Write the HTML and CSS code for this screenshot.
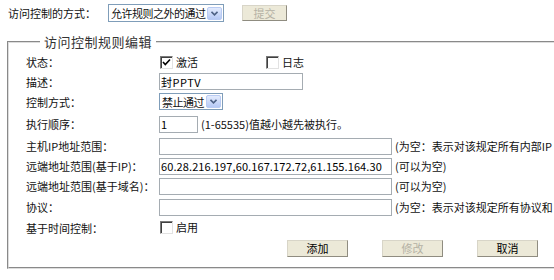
FILE: index.html
```html
<!DOCTYPE html>
<html>
<head>
  <meta charset="utf-8">
  <title>访问控制</title>
  <link rel="stylesheet" href="styles.css">
</head>
<body>
  <div class="topbar">
    <span class="top-label">访问控制的方式：</span>
    <div class="sel sel-mode">
      <span class="sel-text">允许规则之外的通过</span>
      <span class="sel-arrow"><svg width="7" height="5" viewBox="0 0 7 5"><path d="M0.5 0.8 L3.5 3.8 L6.5 0.8" fill="none" stroke="#4d6185" stroke-width="1.6"/></svg></span>
    </div>
    <button class="btn btn-submit" disabled>提交</button>
  </div>

  <fieldset class="editor">
    <legend>访问控制规则编辑</legend>
    <table class="form">
      <tr class="r-status">
        <td class="lbl">状态：</td>
        <td>
          <span class="chk-row">
            <span class="chk"><svg width="9" height="9" viewBox="0 0 9 9"><path d="M1 4 L3.3 6.5 L8 1.5" fill="none" stroke="#000" stroke-width="1.6"/></svg></span>激活
            <span class="chk chk-log"></span>日志
          </span>
        </td>
      </tr>
      <tr class="r-desc">
        <td class="lbl">描述：</td>
        <td><input class="txt txt-desc" type="text" value="封PPTV"></td>
      </tr>
      <tr class="r-ctrl">
        <td class="lbl">控制方式：</td>
        <td>
          <div class="sel sel-ctrl">
            <span class="sel-text">禁止通过</span>
            <span class="sel-arrow"><svg width="7" height="5" viewBox="0 0 7 5"><path d="M0.5 0.8 L3.5 3.8 L6.5 0.8" fill="none" stroke="#4d6185" stroke-width="1.6"/></svg></span>
          </div>
        </td>
      </tr>
      <tr class="r-order">
        <td class="lbl">执行顺序：</td>
        <td><input class="txt txt-order" type="text" value="1"><span class="hint">(1-65535)值越小越先被执行。</span></td>
      </tr>
      <tr>
        <td class="lbl">主机IP地址范围：</td>
        <td><input class="txt txt-wide" type="text" value=""><span class="hint">(为空：表示对该规定所有内部IP</span></td>
      </tr>
      <tr>
        <td class="lbl">远端地址范围(基于IP)：</td>
        <td><input class="txt txt-wide txt-ip" type="text" value="60.28.216.197,60.167.172.72,61.155.164.30"><span class="hint">(可以为空)</span></td>
      </tr>
      <tr>
        <td class="lbl">远端地址范围(基于域名)：</td>
        <td><input class="txt txt-wide" type="text" value=""><span class="hint">(可以为空)</span></td>
      </tr>
      <tr class="r-proto">
        <td class="lbl">协议：</td>
        <td><input class="txt txt-wide" type="text" value=""><span class="hint">(为空：表示对该规定所有协议和</span></td>
      </tr>
      <tr>
        <td class="lbl">基于时间控制：</td>
        <td><span class="chk-row"><span class="chk"></span>启用</span></td>
      </tr>
      <tr class="r-buttons">
        <td></td>
        <td>
          <div class="actions">
            <button class="btn">添加</button>
            <button class="btn" disabled>修改</button>
            <button class="btn">取消</button>
          </div>
        </td>
      </tr>
    </table>
  </fieldset>
</body>
</html>
```

FILE: styles.css
```css
html, body {
  margin: 0;
  padding: 0;
}

body {
  width: 554px;
  height: 280px;
  overflow: hidden;
  background-color: #fff;
  color: #111;
  font-family: "Noto Sans CJK SC", sans-serif;
  font-size: 11px;
  line-height: 14px;
}

/* top line */
.topbar {
  display: flex;
  align-items: center;
  height: 18px;
  padding: 4px 0 0 8px;
}

.top-label {
  width: 100px;
}

.sel {
  display: inline-flex;
  align-items: center;
  box-sizing: border-box;
  height: 17px;
  padding: 0 1px 0 2px;
  border: 1px solid #7f9db9;
  background-color: #fff;
  vertical-align: middle;
}

.sel-text {
  flex: 1;
  white-space: nowrap;
  overflow: hidden;
  letter-spacing: -0.5px;
}

.sel-arrow {
  display: flex;
  flex: none;
  align-items: center;
  justify-content: center;
  box-sizing: border-box;
  width: 15px;
  height: 13px;
  border: 1px solid #b9cbf3;
  border-radius: 2px;
  background: linear-gradient(#e3ebfd, #b6c9f5);
}

.sel-mode {
  width: 116px;
  height: 18px;
}

.sel-ctrl {
  width: 64px;
}

.btn {
  box-sizing: border-box;
  width: 61px;
  height: 17px;
  padding: 0;
  border: 1px solid #9d9a8e;
  border-color: #d8d5c8 #8f8c80 #8f8c80 #d8d5c8;
  background-color: #ece9d8;
  color: #000;
  font-family: inherit;
  font-size: 11px;
  line-height: 14px;
}

.btn:disabled {
  color: #b4b1a4;
}

.btn-submit {
  width: 45px;
  height: 16px;
  margin-left: 18px;
}

/* rule editor */
.editor {
  box-sizing: border-box;
  width: 600px;
  margin: 11px 0 0 7px;
  padding: 1px 0 9px 17px;
  border: 2px groove #ddd;
}

.editor legend {
  margin-left: 14px;
  padding: 0 4px;
  color: #333;
  font-size: 13px;
  line-height: 18px;
  letter-spacing: 0.5px;
}

.form {
  border-collapse: collapse;
}

.form td {
  height: 20px;
  padding: 0;
  vertical-align: middle;
  white-space: nowrap;
}

.form td.lbl {
  width: 133px;
}

.r-status td { height: 20px; }
.r-desc td { height: 19px; }
.r-ctrl td { height: 21px; }
.r-order td { height: 24px; }
.r-proto td { height: 22px; }

.chk-row {
  display: inline-flex;
  align-items: center;
}

.chk {
  display: inline-flex;
  align-items: center;
  justify-content: center;
  box-sizing: border-box;
  width: 13px;
  height: 13px;
  margin: 0 3px 0 1px;
  border: 1px solid;
  border-color: #7a7a7a #e2e2e2 #e2e2e2 #7a7a7a;
  box-shadow: inset 1px 1px 0 #404040;
  background-color: #fff;
}

.chk-log {
  margin-left: 68px;
}

.txt {
  box-sizing: border-box;
  height: 17px;
  margin: 0;
  padding: 0 1px;
  border: 1px solid #a5acb2;
  color: #000;
  font-family: inherit;
  font-size: 11px;
  letter-spacing: 0.5px;
  vertical-align: middle;
}

.txt-ip {
  letter-spacing: 0.1px;
}

.txt-desc {
  width: 144px;
}

.txt-order {
  width: 39px;
}

.txt-wide {
  width: 233px;
}

.hint {
  margin-left: 3px;
  vertical-align: middle;
}

.actions {
  display: flex;
  gap: 34px;
  padding-left: 128px;
}
```
